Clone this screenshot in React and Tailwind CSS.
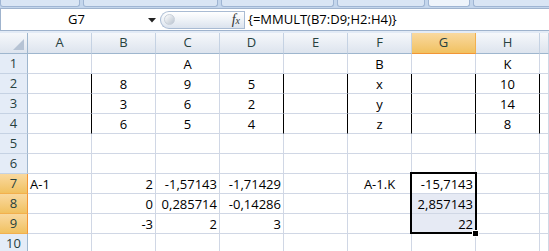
import React from 'react';

const cols = ['A', 'B', 'C', 'D', 'E', 'F', 'G', 'H', 'I'];

const data = {
  1: { C: ['A', 'c'], F: ['B', 'c'], H: ['K', 'c'] },
  2: { B: ['8', 'c'], C: ['9', 'c'], D: ['5', 'c'], F: ['x', 'c'], H: ['10', 'c'] },
  3: { B: ['3', 'c'], C: ['6', 'c'], D: ['2', 'c'], F: ['y', 'c'], H: ['14', 'c'] },
  4: { B: ['6', 'c'], C: ['5', 'c'], D: ['4', 'c'], F: ['z', 'c'], H: ['8', 'c'] },
  7: { A: ['A-1', 'l'], B: ['2', 'r'], C: ['-1,57143', 'r'], D: ['-1,71429', 'r'], F: ['A-1.K', 'c'], G: ['-15,7143', 'r'] },
  8: { B: ['0', 'r'], C: ['0,285714', 'r'], D: ['-0,14286', 'r'], G: ['2,857143', 'r'] },
  9: { B: ['-3', 'r'], C: ['2', 'r'], D: ['3', 'r'], G: ['22', 'r'] },
};

const blackRight = ['A', 'D', 'E', 'F', 'G', 'H'];

function Cell({ row, col }) {
  const entry = data[row] && data[row][col];
  const text = entry ? entry[0] : '';
  const align = entry ? entry[1] : 'l';
  const black = row >= 2 && row <= 4 && blackRight.includes(col);
  const sel = col === 'G' && (row === 8 || row === 9);
  const justify = align === 'c' ? 'justify-center' : align === 'r' ? 'justify-end pr-[2px]' : 'justify-start pl-[2px]';
  return (
    <div
      className={`flex items-end h-[20px] border-b border-r border-b-[#d0d7e5] overflow-hidden whitespace-nowrap leading-[17px] ${justify} ${
        black ? 'border-r-black' : 'border-r-[#d0d7e5]'
      } ${sel ? 'bg-[#e6eaf4]' : 'bg-white'}`}
    >
      {text}
    </div>
  );
}

function RowHeader({ n }) {
  const sel = n >= 7 && n <= 9;
  return (
    <div
      className={`flex items-center justify-center h-[20px] border-b border-r text-[#27413e] ${
        sel
          ? 'bg-gradient-to-b from-[#f9d99f] to-[#f1c15f] border-b-[#f2b04e] border-r-[#f29536]'
          : 'bg-[#e4ecf7] border-b-[#c5d2e3] border-r-[#9eb6ce]'
      }`}
    >
      {n}
    </div>
  );
}

function ColHeader({ c }) {
  const sel = c === 'G';
  return (
    <div
      className={`flex items-center justify-center h-[21px] border-b border-r text-[#27413e] ${
        sel
          ? 'bg-gradient-to-b from-[#f9d99f] to-[#f1c15f] border-b-[#f29536] border-r-[#f2b04e]'
          : 'bg-gradient-to-b from-[#f6f8fb] to-[#dde4ee] border-b-[#9eb6ce] border-r-[#c5d2e3]'
      }`}
    >
      {c === 'I' ? '' : c}
    </div>
  );
}

export default function App() {
  const rows = [1, 2, 3, 4, 5, 6, 7, 8, 9, 10];
  return (
    <div className="w-[549px] h-[251px] overflow-hidden bg-[#dfe8f5] text-[13px] text-black" style={{ fontFamily: '"Open Sans", "Liberation Sans", sans-serif' }}>
      {/* ribbon remnants */}
      <div className="flex h-[8px] bg-[#c4d6ec] gap-[3px]">
        <div className="w-[80px] h-[7px] rounded-b-[3px] border border-t-0 border-[#9fb5d3] bg-[#d9e5f4]" />
        <div className="w-[135px] h-[7px] rounded-b-[3px] border border-t-0 border-[#9fb5d3] bg-[#d9e5f4]" />
        <div className="w-[113px] h-[7px] rounded-b-[3px] border border-t-0 border-[#9fb5d3] bg-[#d9e5f4]" />
        <div className="w-[88px] h-[7px] rounded-b-[3px] border border-t-0 border-[#9fb5d3] bg-[#d9e5f4]" />
        <div className="w-[42px] h-[7px] rounded-b-[3px] border border-t-0 border-[#9fb5d3] bg-[#eef4fb]" />
        <div className="flex-1 h-[7px] rounded-bl-[3px] border border-t-0 border-r-0 border-[#9fb5d3] bg-[#d9e5f4]" />
      </div>
      {/* formula bar */}
      <div className="flex h-[23px] border-t border-b border-[#9fb3cd] bg-white">
        <div className="flex items-center w-[160px] h-full border-l border-[#9fb3cd] relative">
          <div className="flex-1 text-center pl-[4px]">G7</div>
          <svg width="8" height="5" viewBox="0 0 8 5" className="mr-[4px] mt-[1px]">
            <polygon points="0,0 8,0 4,4.5" fill="#222" />
          </svg>
        </div>
        <div className="flex items-center h-full pr-[2px]">
          <div className="flex items-center w-[84px] h-[18px] rounded-l-full border border-r-0 border-[#a9bbd3] bg-gradient-to-b from-[#ffffff] via-[#eef2f7] to-[#dbe3ee]">
            <div className="ml-[3px] w-[11px] h-[11px] rounded-full bg-gradient-to-br from-[#ffffff] to-[#b9c3cf] border border-[#c8d0da]" />
            <div className="flex-1" />
            <div className="mr-[4px] flex items-baseline italic text-[#333]" style={{ fontFamily: '"Liberation Serif", serif' }}>
              <span className="text-[14px] leading-none">f</span>
              <span className="text-[10px] leading-none">x</span>
            </div>
          </div>
          <div className="w-px h-[18px] bg-[#a9bbd3]" />
        </div>
        <div className="flex items-center flex-1 pl-[1px] whitespace-nowrap">{'{=MMULT(B7:D9;H2:H4)}'}</div>
      </div>
      <div className="h-[2px] bg-[#e3ebf6]" />
      {/* grid */}
      <div className="relative grid grid-cols-[28px_repeat(8,64px)_1fr]">
        <div className="flex items-end justify-end h-[21px] border-b border-r border-b-[#9eb6ce] border-r-[#9eb6ce] bg-gradient-to-b from-[#f6f8fb] to-[#dde4ee] pr-[3px] pb-[3px]">
          <svg width="11" height="11" viewBox="0 0 11 11">
            <polygon points="11,0 11,11 0,11" fill="#b6c3d4" />
          </svg>
        </div>
        {cols.map((c) => (
          <ColHeader key={c} c={c} />
        ))}
        {rows.map((r) => (
          <React.Fragment key={r}>
            <RowHeader n={r} />
            {cols.map((c) => (
              <Cell key={c} row={r} col={c} />
            ))}
          </React.Fragment>
        ))}
        {/* selection overlay */}
        <div className="absolute left-[410px] top-[139px] w-[67px] h-[62px] border-2 border-black pointer-events-none" />
        <div className="absolute left-[473px] top-[198px] w-[5px] h-[5px] bg-black border border-white box-content -translate-x-[1px] -translate-y-[1px] pointer-events-none" />
      </div>
    </div>
  );
}
